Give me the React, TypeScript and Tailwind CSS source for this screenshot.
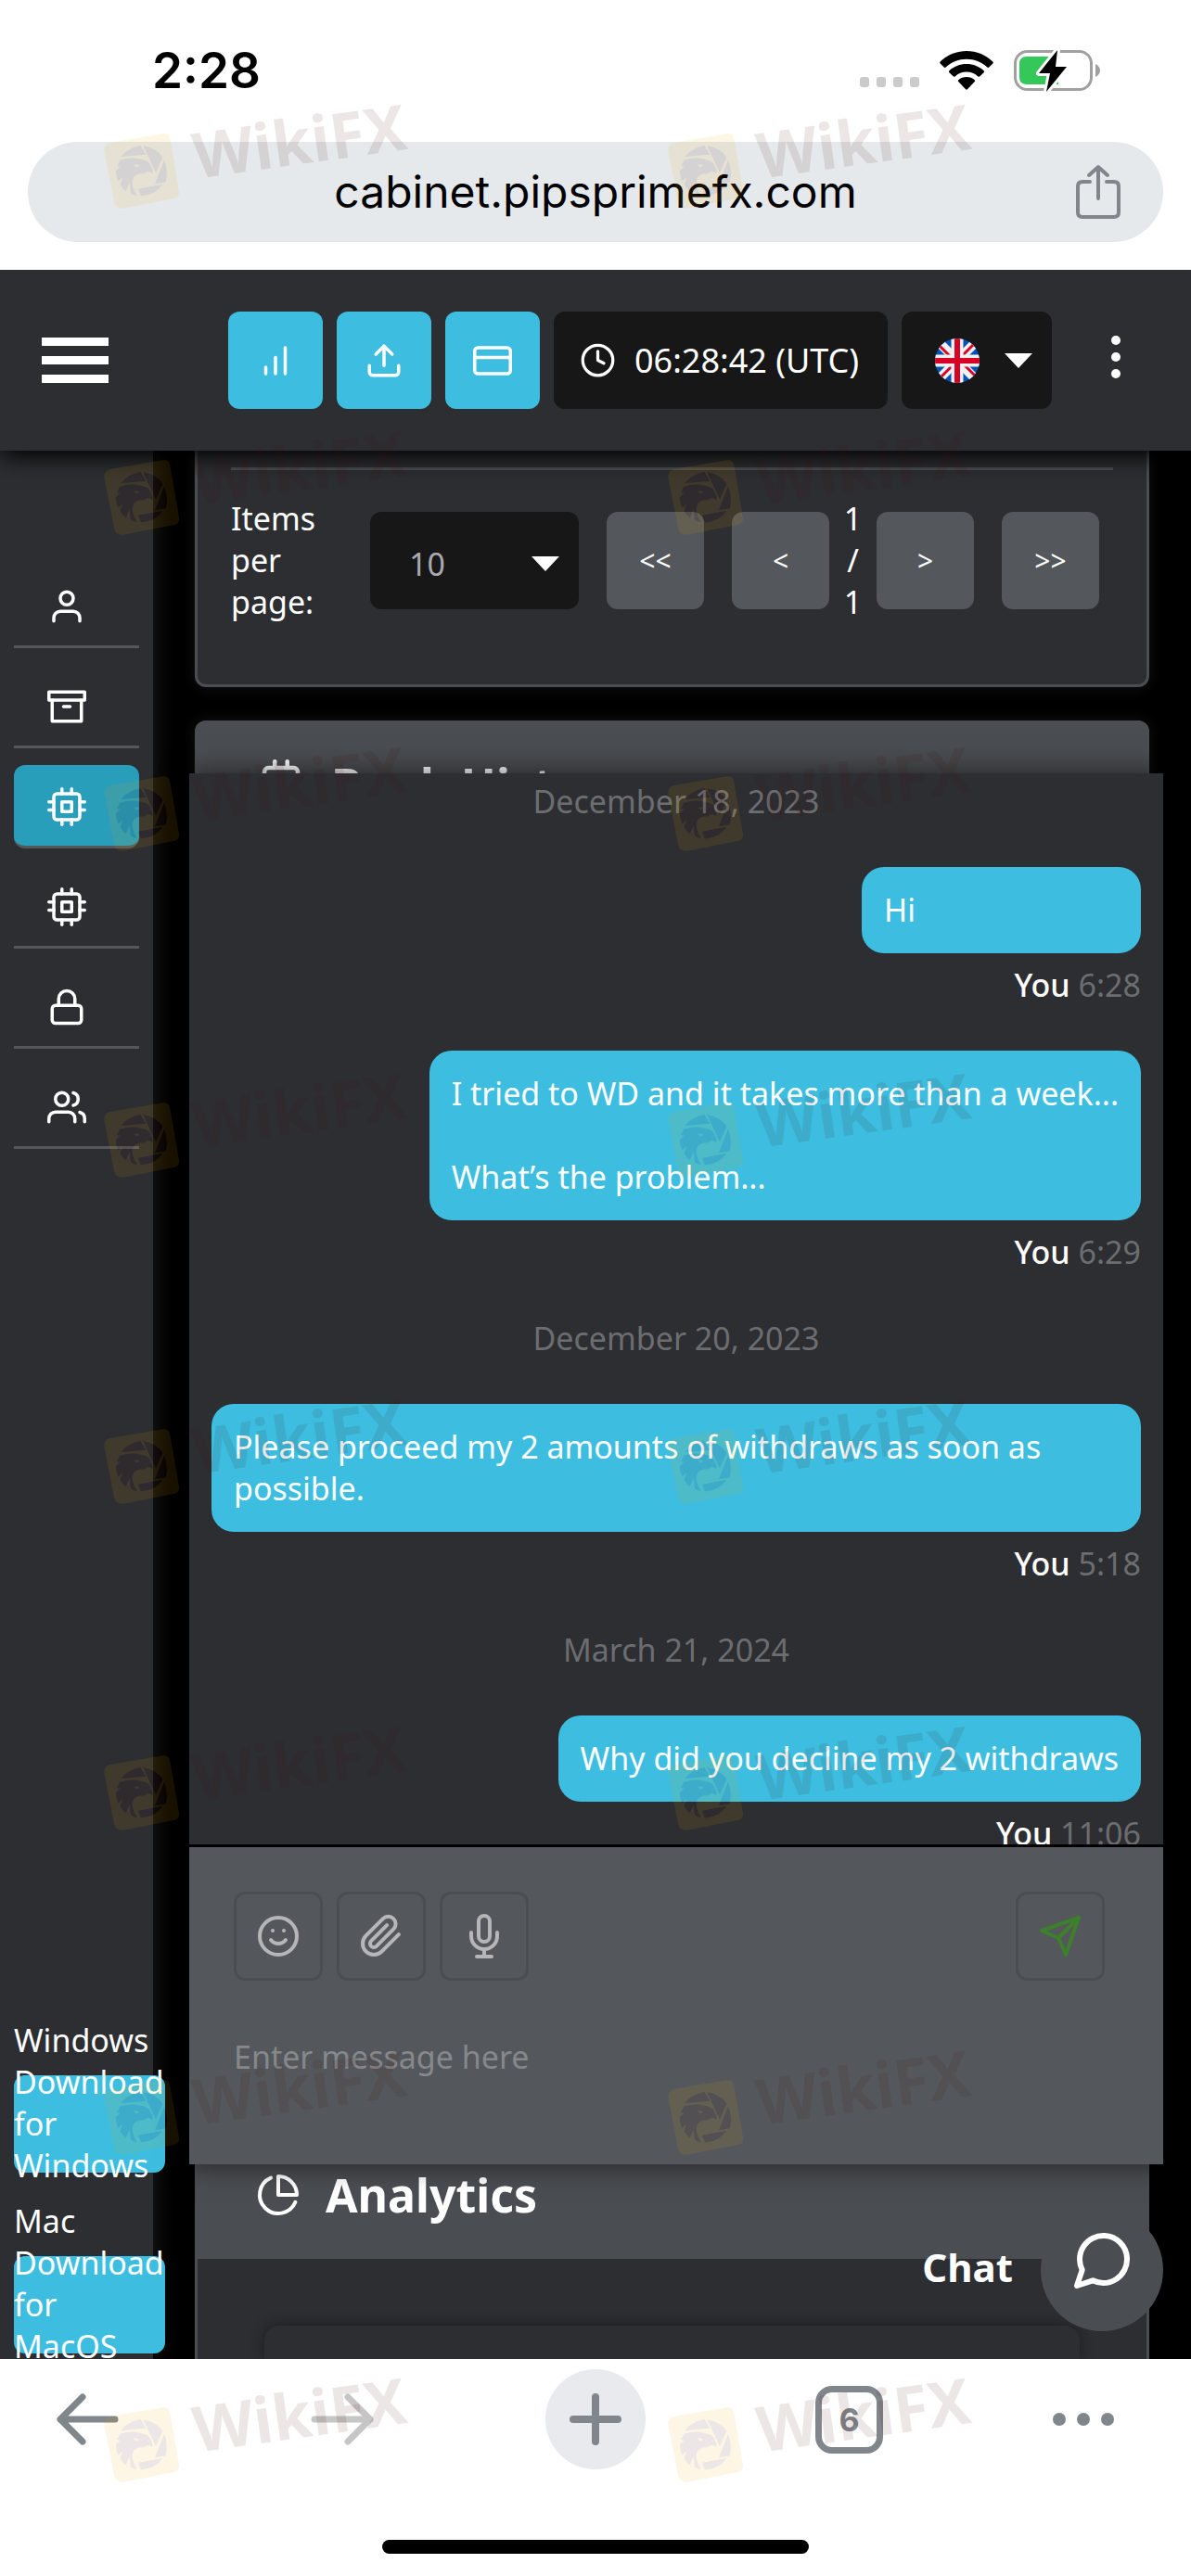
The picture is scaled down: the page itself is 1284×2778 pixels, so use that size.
import { FC, ReactNode } from "react";
import {
    FiArchive, FiBarChart, FiClock, FiCpu, FiCreditCard, FiLock, FiMessageCircle,
    FiMic, FiPaperclip, FiPieChart, FiSend, FiSmile, FiUpload, FiUser, FiUsers,
} from "react-icons/fi";

type ChatItem =
    | { type: "date"; text: string }
    | { type: "message"; lines: string[]; time: string };

const chatItems: ChatItem[] = [
    { type: "date", text: "December 18, 2023" },
    { type: "message", lines: ["Hi"], time: "6:28" },
    { type: "message", lines: ["I tried to WD and it takes more than a week...", "", "What’s the problem..."], time: "6:29" },
    { type: "date", text: "December 20, 2023" },
    { type: "message", lines: ["Please proceed my 2 amounts of withdraws as soon as possible."], time: "5:18" },
    { type: "date", text: "March 21, 2024" },
    { type: "message", lines: ["Why did you decline my 2 withdraws"], time: "11:06" },
];

const menuItems = [
    { label: "Profile", Icon: FiUser },
    { label: "Wallet", Icon: FiArchive },
    { label: "Accounts", Icon: FiCpu, active: true },
    { label: "Demo accounts", Icon: FiCpu },
    { label: "Security", Icon: FiLock },
    { label: "Partners", Icon: FiUsers },
];

const downloads = [
    { label: "Windows", text: "Download for Windows" },
    { label: "Mac", text: "Download for MacOS" },
];

const watermarkRows = [110, 462, 803, 1155, 1507, 1859, 2209, 2562];
const watermarkCols = [112, 720];

const StatusBar: FC = () => (
    <div className="flex h-[153px] items-center justify-between pr-[97px] pb-0.5 pl-[164px]">
        <div className="text-[53px] leading-[54px] font-semibold">2:28</div>
        <div className="flex items-center gap-[22px]">
            <div className="flex gap-2 pt-[26px]">
                <span className="h-[11px] w-[10px] rounded-[3px] bg-[#cbcbcb]" />
                <span className="h-[11px] w-[10px] rounded-[3px] bg-[#cbcbcb]" />
                <span className="h-[11px] w-[10px] rounded-[3px] bg-[#cbcbcb]" />
                <span className="h-[11px] w-[10px] rounded-[3px] bg-[#cbcbcb]" />
            </div>
            <svg width="58" height="42" viewBox="0 0 58 42">
                <path d="M29 0C40 0 50 4.300 57.300 11.500C57.900 12.100 57.900 12.900 57.300 13.500L53.300 17.500C52.700 18.100 51.900 18.100 51.300 17.500C45.300 11.900 37.500 8.700 29 8.700C20.500 8.700 12.700 11.900 6.700 17.500C6.100 18.100 5.300 18.100 4.700 17.500L.7 13.500C.1 12.900 .1 12.100 .7 11.500C8 4.300 18 0 29 0Z" />
                <path d="M29 14C36.200 14 42.700 16.700 47.600 21.200C48.200 21.800 48.200 22.600 47.600 23.200L43.400 27.300C42.800 27.900 42 27.900 41.400 27.400C38.100 24.400 33.800 22.600 29 22.600C24.200 22.600 19.900 24.400 16.600 27.400C16 27.900 15.200 27.900 14.600 27.300L10.400 23.200C9.800 22.600 9.800 21.800 10.400 21.200C15.300 16.700 21.800 14 29 14Z" />
                <path d="M29 28C32.300 28 35.400 29.200 37.700 31.200C38.300 31.700 38.300 32.500 37.800 33.100L29.900 41.300C29.400 41.900 28.600 41.900 28.100 41.300L20.200 33.100C19.700 32.500 19.700 31.700 20.300 31.200C22.600 29.200 25.700 28 29 28Z" />
            </svg>
            <svg width="94" height="46" viewBox="0 0 94 46">
                <rect x="1.500" y="2.500" width="82" height="41" rx="13" fill="none" stroke="#a0a0a0" strokeWidth="3" />
                <path d="M88 16C91 17.500 93 20 93 23S91 28.500 88 30Z" fill="#a0a0a0" />
                <path d="M14 8H48V38H14Q6 38 6 30V16Q6 8 14 8Z" fill="#34c759" />
                <path d="M47 1L27 26H39L35 46L57 19H45Z" fill="#000" stroke="#fff" strokeWidth="6" strokeLinejoin="round" paintOrder="stroke" />
            </svg>
        </div>
    </div>
);

const AddressBar: FC = () => (
    <div className="px-[30px] pb-[30px]">
        <div className="flex h-[108px] items-center rounded-full bg-[#e6e9eb] px-[46px]">
            <span className="w-12" />
            <input
                aria-label="Address"
                readOnly
                value="cabinet.pipsprimefx.com"
                className="min-w-0 flex-1 bg-transparent text-center text-[48px] leading-[60px] outline-none"
            />
            <button type="button" aria-label="Share">
                <svg width="48" height="60" viewBox="0 0 48 60" fill="none" stroke="#80868b" strokeWidth="4" strokeLinecap="round" strokeLinejoin="round">
                    <path d="M15 19H7Q2 19 2 24V52Q2 57 7 57H41Q46 57 46 52V24Q46 19 41 19H33M24 37V3M14 12L24 3L34 12" />
                </svg>
            </button>
        </div>
    </div>
);

const Caret: FC = () => (
    <svg width="30" height="16" viewBox="0 0 30 16" fill="#fff"><path d="M0 0H30L15 16Z" /></svg>
);

const Flag: FC = () => (
    <svg width="48" height="48" viewBox="0 0 48 48">
        <clipPath id="flag"><circle cx="24" cy="24" r="24" /></clipPath>
        <g clipPath="url(#flag)">
            <rect width="48" height="48" fill="#0052b4" />
            <path d="M0 0L48 48M48 0L0 48" stroke="#f0f0f0" strokeWidth="10" />
            <path d="M4 7L20 23M28 20L44 4M20 28L4 44M28 25L44 41" stroke="#d80027" strokeWidth="3" />
            <path d="M24 0V48M0 24H48" stroke="#f0f0f0" strokeWidth="13" />
            <path d="M24 0V48M0 24H48" stroke="#d80027" strokeWidth="6" />
        </g>
    </svg>
);

const HeaderButton: FC<{ label: string; children: ReactNode }> = ({ label, children }) => (
    <button type="button" aria-label={label} className="flex h-[105px] w-[102px] items-center justify-center rounded-xl bg-[#3dbee0] text-white">
        {children}
    </button>
);

const Header: FC = () => (
    <header className="relative z-20 flex h-[195px] items-center bg-[#2d2e32] px-[45px] text-white shadow-[0_6px_24px_#000000]">
        <button type="button" aria-label="Menu" className="flex flex-col gap-[11px]">
            <span className="h-[9px] w-[72px] bg-white" />
            <span className="h-[9px] w-[72px] bg-white" />
            <span className="h-[9px] w-[72px] bg-white" />
        </button>
        <div className="ml-auto flex gap-[15px]">
            <HeaderButton label="Statistics"><FiBarChart size={42} /></HeaderButton>
            <HeaderButton label="Deposit"><FiUpload size={42} /></HeaderButton>
            <HeaderButton label="Cards"><FiCreditCard size={42} /></HeaderButton>
            <div className="flex h-[105px] w-[360px] items-center rounded-xl bg-[#171717] pl-7">
                <FiClock size={39} />
                <span className="ml-5 text-[36px] whitespace-nowrap">06:28:42 (UTC)</span>
            </div>
            <button type="button" aria-label="Language" className="flex h-[105px] w-[162px] items-center gap-[27px] rounded-xl bg-[#171717] pl-9">
                <Flag />
                <Caret />
            </button>
        </div>
        <button type="button" aria-label="More" className="ml-[33px] flex w-[72px] flex-col items-center gap-2 pb-2">
            <span className="size-[10px] rounded-full bg-white" />
            <span className="size-[10px] rounded-full bg-white" />
            <span className="size-[10px] rounded-full bg-white" />
        </button>
    </header>
);

const Sidebar: FC = () => (
    <aside className="relative z-10 flex w-[165px] shrink-0 flex-col justify-between bg-[#2d2e32] px-[15px] pt-[123px] pb-[6px] text-white shadow-[4px_0_20px_#1a1a1a]">
        <nav className="flex flex-col gap-[18px]">
            {menuItems.map(({ label, Icon, active }) => (
                <a
                    key={label}
                    href="#"
                    aria-label={label}
                    className={active
                        ? "h-[90px] rounded-xl border-b-[3px] border-[#54585c] bg-[#289ebb] pt-6 pl-9"
                        : "h-[90px] border-b-[3px] border-[#54585c] pt-6 pl-9"}
                >
                    <Icon size={42} />
                </a>
            ))}
        </nav>
        <div className="flex flex-col gap-[30px]">
            {downloads.map(({ label, text }) => (
                <div key={label}>
                    <div className="mb-[15px]">{label}</div>
                    <button type="button" className="flex h-[105px] w-[163px] items-center rounded-xl bg-[#3dbee0] text-left">
                        {text}
                    </button>
                </div>
            ))}
        </div>
    </aside>
);

const PageButton: FC<{ label: string; children: ReactNode }> = ({ label, children }) => (
    <button type="button" aria-label={label} className="size-[105px] shrink-0 rounded-xl bg-[#54585c] text-[30px]">
        {children}
    </button>
);

const Pagination: FC = () => (
    <section className="rounded-b-xl border-x-[3px] border-b-[3px] border-[#4a4d51] bg-[#2d2e32] px-9 pt-[18px] pb-[66px] shadow-[0_0_16px_#141414]">
        <div className="border-t-[3px] border-[#4a4d51] pt-[30px]">
            <div className="flex items-center">
                <label htmlFor="per-page" className="w-[120px] shrink-0">Items per page:</label>
                <div className="relative ml-[30px]">
                    <select id="per-page" defaultValue="10" className="h-[105px] w-[225px] appearance-none rounded-xl bg-[#171717] pt-2 pl-[42px] text-[#a9a9b0]">
                        <option>10</option>
                        <option>25</option>
                    </select>
                    <span className="pointer-events-none absolute top-12 right-[21px]"><Caret /></span>
                </div>
                <div className="ml-[30px] flex gap-[30px]">
                    <PageButton label="First page">&lt;&lt;</PageButton>
                    <PageButton label="Previous page">&lt;</PageButton>
                </div>
                <div className="mx-[15px] w-[21px] text-center">1 / 1</div>
                <div className="flex gap-[30px]">
                    <PageButton label="Next page">&gt;</PageButton>
                    <PageButton label="Last page">&gt;&gt;</PageButton>
                </div>
            </div>
        </div>
    </section>
);

const CardHeader: FC<{ icon: ReactNode; title: string }> = ({ icon, title }) => (
    <div className="flex h-[138px] items-center gap-[27px] rounded-t-xl bg-[#4a4d51] px-[66px]">
        {icon}
        <h2 className="text-[50px] leading-[60px] font-bold">{title}</h2>
    </div>
);

const Content: FC = () => (
    <div className="flex min-w-0 flex-1 flex-col gap-9 px-[45px]">
        <Pagination />
        <section className="flex-1 rounded-xl bg-[#2d2e32] shadow-[0_0_16px_#141414]">
            <CardHeader icon={<FiCpu size={54} />} title="Bank History" />
        </section>
        <section className="bg-[#2d2e32]">
            <CardHeader icon={<FiPieChart size={48} />} title="Analytics" />
            <div className="border-x-[3px] border-[#4a4d51] px-[72px] pt-[72px]">
                <div className="h-9 rounded-t-2xl bg-[#2d2e32] shadow-[0_0_14px_#1c1c1f]" />
            </div>
        </section>
    </div>
);

const ToolButton: FC<{ label: string; children: ReactNode }> = ({ label, children }) => (
    <button type="button" aria-label={label} className="flex size-24 items-center justify-center rounded-xl border-[3px] border-[#4a4d51] text-[#b5b6b8]">
        {children}
    </button>
);

const ChatPanel: FC = () => (
    <section className="absolute top-[348px] right-[30px] bottom-[210px] left-[204px] z-10 flex flex-col bg-[#2d2e32] shadow-[0_0_28px_#00000099]">
        <div className="flex min-h-0 flex-1 flex-col gap-12 overflow-hidden px-6 pt-2">
            {chatItems.map((item, index) => item.type === "date" ? (
                <div key={index} className="text-center text-[#6c6d70]">{item.text}</div>
            ) : (
                <div key={index} className="flex flex-col items-end">
                    <div className="min-w-[301px] rounded-3xl bg-[#3dbee0] p-6">
                        {item.lines.map((line, i) => <p key={i} className="min-h-[45px]">{line}</p>)}
                    </div>
                    <div className="mt-3 text-[#6c6d70]"><span className="font-medium text-white">You</span> {item.time}</div>
                </div>
            ))}
        </div>
        <div className="h-[345px] shrink-0 border-t-[3px] border-black bg-[#54585c] pt-12 pr-[63px] pl-12">
            <div className="flex gap-[15px]">
                <ToolButton label="Emoji"><FiSmile size={48} /></ToolButton>
                <ToolButton label="Attach file"><FiPaperclip size={48} /></ToolButton>
                <ToolButton label="Record voice"><FiMic size={48} /></ToolButton>
                <div className="ml-auto">
                    <ToolButton label="Send"><FiSend size={48} className="text-[#3d7f2a]" /></ToolButton>
                </div>
            </div>
            <textarea
                aria-label="Message"
                placeholder="Enter message here"
                className="mt-[60px] block h-[90px] w-full resize-none bg-transparent outline-none placeholder:text-[#86888b]"
            />
        </div>
    </section>
);

const Toolbar: FC = () => (
    <footer className="h-[234px] bg-white pt-[11px]">
        <div className="flex items-center justify-between px-[41px]">
            <button type="button" aria-label="Back" className="flex size-[108px] items-center justify-center">
                <svg width="68" height="56" viewBox="0 0 68 56" fill="none" stroke="#80868b" strokeWidth="7" strokeLinecap="round" strokeLinejoin="round"><path d="M28 4L4 28L28 52M4 28H63" /></svg>
            </button>
            <button type="button" aria-label="Forward" className="flex size-[108px] items-center justify-center">
                <svg width="68" height="56" viewBox="0 0 68 56" fill="none" stroke="#c6c6c6" strokeWidth="7" strokeLinecap="round" strokeLinejoin="round"><path d="M40 4L64 28L40 52M64 28H4" /></svg>
            </button>
            <button type="button" aria-label="New tab" className="flex size-[108px] items-center justify-center rounded-full bg-[#e8eaed]">
                <svg width="56" height="56" viewBox="0 0 56 56" stroke="#80868b" strokeWidth="8" strokeLinecap="round"><path d="M28 4V52M4 28H52" /></svg>
            </button>
            <button type="button" aria-label="Tabs" className="flex size-[108px] items-center justify-center">
                <span className="flex size-[73px] items-center justify-center rounded-[18px] border-[7px] border-[#80868b] text-[34px] font-bold text-[#80868b]">6</span>
            </button>
            <button type="button" aria-label="More" className="flex size-[108px] items-center gap-3">
                <span className="size-[14px] rounded-full bg-[#80868b]" />
                <span className="size-[14px] rounded-full bg-[#80868b]" />
                <span className="size-[14px] rounded-full bg-[#80868b]" />
            </button>
        </div>
        <div className="mx-auto mt-[76px] h-[15px] w-[460px] rounded-full bg-black" />
    </footer>
);

// shutter blades and the eagle head inside the WikiFX badge
const badgeShape =
    "M150 102Q172 74 213 66L231 95Z M222 67Q262 72 285 104L263 154Z M290 113Q304 145 295 184L260 190Z M206 206L284 192Q262 226 215 229Z " +
    "M147 113Q180 102 213 110Q244 114 247 134Q255 142 251 157Q243 148 232 151Q228 158 213 157Q190 160 187 182Q186 202 202 228Q190 228 182 220L178 186L166 214Q154 206 148 192L156 168L141 182Q134 166 134 148L148 134L138 132Z M190 127L211 129L201 137Z";

const badgeBox = "M118 56L285 28Q305 25 309 44L338 213Q340 233 322 237L157 269Q136 271 129 253L96 84Q94 60 118 56Z";

const Watermarks: FC = () => (
    <div aria-hidden="true" className="pointer-events-none absolute inset-0 z-40 overflow-hidden">
        {watermarkRows.map((top) => watermarkCols.map((left) => (
            <div key={`${top}-${left}`} className="absolute flex items-start" style={{ top, left }}>
                <svg width="81" height="81" viewBox="95 27 243 243" className="mt-[34px]">
                    <path d={`${badgeBox} ${badgeShape}`} fillRule="evenodd" fill="#eba500" fillOpacity="0.1" />
                    <path d={badgeShape} fillRule="evenodd" fill="#420a0a" fillOpacity="0.1" />
                </svg>
                <div className="ml-[14px] -rotate-8 text-[68px] leading-[82px] font-bold text-[#420a0a]/10">WikiFX</div>
            </div>
        )))}
    </div>
);

export default function App() {
    return (
        <div className="relative flex min-h-screen flex-col bg-white font-['Inter',sans-serif] text-black">
            <StatusBar />
            <AddressBar />
            <div className="flex flex-1 flex-col overflow-hidden font-['Noto_Sans',sans-serif] text-[34px] leading-[45px] text-white">
                <Header />
                <main className="relative flex flex-1 overflow-hidden bg-black">
                    <Sidebar />
                    <Content />
                    <ChatPanel />
                    <div className="absolute right-[30px] bottom-[30px] z-20 flex items-center gap-[30px]">
                        <span className="pb-2 text-[42px] font-bold">Chat</span>
                        <button type="button" aria-label="Open chat" className="flex size-[132px] items-center justify-center rounded-full bg-[#4a4d51] pb-5">
                            <FiMessageCircle size={72} />
                        </button>
                    </div>
                </main>
            </div>
            <Toolbar />
            <div className="font-['Noto_Sans',sans-serif]">
                <Watermarks />
            </div>
        </div>
    );
}
